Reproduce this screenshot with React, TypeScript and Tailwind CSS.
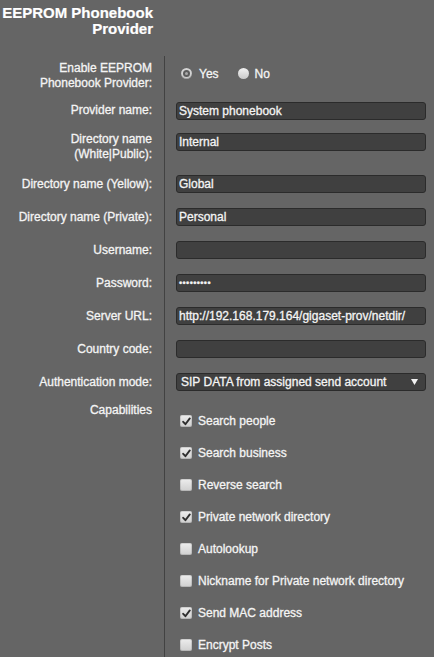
import React from 'react';

const CAPABILITIES: { label: string; checked: boolean }[] = [
  { label: 'Search people', checked: true },
  { label: 'Search business', checked: true },
  { label: 'Reverse search', checked: false },
  { label: 'Private network directory', checked: true },
  { label: 'Autolookup', checked: false },
  { label: 'Nickname for Private network directory', checked: false },
  { label: 'Send MAC address', checked: true },
  { label: 'Encrypt Posts', checked: false },
];

function Field({ value }: { value: string }) {
  return (
    <input
      readOnly
      type="text"
      value={value}
      className="block h-[18px] w-full rounded-[3px] border border-[#2b2b2b] bg-[#404040] px-[2px] py-0 text-[12px] leading-[16px] text-[#f4f4f4] outline-none"
    />
  );
}

function Radio({ checked }: { checked: boolean }) {
  if (checked) {
    return (
      <span className="flex h-[11px] w-[11px] items-center justify-center rounded-full bg-[#d4d4d4] shadow-[inset_0_-1px_1px_rgba(0,0,0,0.25)]">
        <span className="flex h-[7px] w-[7px] items-center justify-center rounded-full bg-[#5c5c5c]">
          <span className="h-[3px] w-[3px] rounded-full bg-[#a8a8a8]" />
        </span>
      </span>
    );
  }
  return <span className="h-[11px] w-[11px] rounded-full bg-gradient-to-b from-[#f2f2f2] to-[#c9c9c9]" />;
}

function Checkbox({ checked }: { checked: boolean }) {
  return (
    <span className="flex h-[12px] w-[12px] shrink-0 items-center justify-center rounded-[2px] bg-gradient-to-b from-[#ededed] to-[#cfcfcf] shadow-[inset_0_0_0_1px_rgba(0,0,0,0.12)]">
      {checked && (
        <svg width="9" height="9" viewBox="0 0 9 9">
          <path d="M1.2 4.8 L3.4 7.2 L7.8 1.4" fill="none" stroke="#2e2e2e" strokeWidth="1.9" strokeLinecap="round" strokeLinejoin="round" />
        </svg>
      )}
    </span>
  );
}

function Label({ children }: { children: React.ReactNode }) {
  return (
    <div className="flex w-[164px] shrink-0 items-center justify-end whitespace-nowrap pr-[12px] text-right leading-[15px]">
      <span>{children}</span>
    </div>
  );
}

export default function App() {
  return (
    <div className="min-h-screen bg-[#656565] font-['Liberation_Sans',Arial,sans-serif] text-[12px] text-[#f4f4f4] [-webkit-text-stroke:0.3px_currentColor]">
      <div className="flex">
        <h1 className="w-[164px] pr-[11px] pt-[5px] text-right text-[15px] font-bold leading-[16px] text-white [-webkit-text-stroke:0.2px_currentColor]">
          EEPROM Phonebook
          <br />
          Provider
        </h1>
      </div>

      <div className="mt-[19px]">
        {/* Enable */}
        <div className="flex h-[39px]">
          <Label>
            Enable EEPROM
            <br />
            Phonebook Provider:
          </Label>
          <div className="flex-1 border-l border-[#424242] pl-[16px] pt-[10px]">
            <div className="flex h-[15px] items-center">
              <Radio checked />
              <span className="ml-[7px]">Yes</span>
              <span className="ml-[19px] flex items-center">
                <Radio checked={false} />
              </span>
              <span className="ml-[6px]">No</span>
            </div>
          </div>
        </div>

        <div className="flex h-[31px]">
          <Label>Provider name:</Label>
          <div className="flex-1 border-l border-[#424242] pl-[11px] pr-[8px] pt-[7px]">
            <Field value="System phonebook" />
          </div>
        </div>

        <div className="flex h-[42px]">
          <Label>
            Directory name
            <br />
            (White|Public):
          </Label>
          <div className="flex-1 border-l border-[#424242] pl-[11px] pr-[8px] pt-[7px]">
            <Field value="Internal" />
          </div>
        </div>

        <div className="flex h-[33px]">
          <Label>Directory name (Yellow):</Label>
          <div className="flex-1 border-l border-[#424242] pl-[11px] pr-[8px] pt-[7px]">
            <Field value="Global" />
          </div>
        </div>

        <div className="flex h-[33px]">
          <Label>Directory name (Private):</Label>
          <div className="flex-1 border-l border-[#424242] pl-[11px] pr-[8px] pt-[7px]">
            <Field value="Personal" />
          </div>
        </div>

        <div className="flex h-[33px]">
          <Label>Username:</Label>
          <div className="flex-1 border-l border-[#424242] pl-[11px] pr-[8px] pt-[7px]">
            <Field value="" />
          </div>
        </div>

        <div className="flex h-[33px]">
          <Label>Password:</Label>
          <div className="flex-1 border-l border-[#424242] pl-[11px] pr-[8px] pt-[7px]">
            <div className="flex h-[18px] items-center rounded-[3px] border border-[#2b2b2b] bg-[#404040] px-[2px]">
              <span className="text-[9px] leading-[9px] tracking-[0.4px]">•••••••••</span>
            </div>
          </div>
        </div>

        <div className="flex h-[33px]">
          <Label>Server URL:</Label>
          <div className="flex-1 border-l border-[#424242] pl-[11px] pr-[8px] pt-[7px]">
            <Field value="http://192.168.179.164/gigaset-prov/netdir/" />
          </div>
        </div>

        <div className="flex h-[33px]">
          <Label>Country code:</Label>
          <div className="flex-1 border-l border-[#424242] pl-[11px] pr-[8px] pt-[7px]">
            <Field value="" />
          </div>
        </div>

        <div className="flex h-[33px]">
          <Label>Authentication mode:</Label>
          <div className="flex-1 border-l border-[#424242] pl-[11px] pr-[8px] pt-[7px]">
            <div className="flex h-[18px] items-center justify-between rounded-[3px] border border-[#2b2b2b] bg-[#404040] pl-[4px] pr-[7px] leading-[16px]">
              <span>SIP DATA from assigned send account</span>
              <svg width="7" height="6" viewBox="0 0 7 6">
                <path d="M0 0 H7 L3.5 6 Z" fill="#f2f2f2" />
              </svg>
            </div>
          </div>
        </div>

        {/* Capabilities */}
        <div className="flex">
          <div className="w-[164px] shrink-0 pr-[12px] pt-[4px] text-right leading-[15px]">Capabilities</div>
          <ul className="flex-1 border-l border-[#424242] pl-[15px] pt-[6px]">
            {CAPABILITIES.map((c) => (
              <li key={c.label} className="flex h-[32px] items-center gap-[6px]">
                <Checkbox checked={c.checked} />
                <span className="whitespace-nowrap">{c.label}</span>
              </li>
            ))}
          </ul>
        </div>
      </div>
    </div>
  );
}
